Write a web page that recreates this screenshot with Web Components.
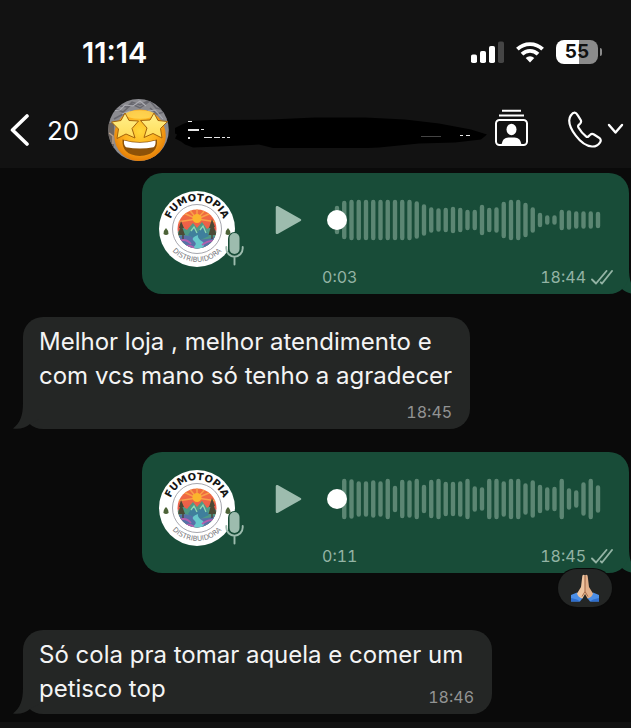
<!DOCTYPE html>
<html lang="pt-BR">
<head>
<meta charset="utf-8">
<meta name="viewport" content="width=device-width, initial-scale=1">
<title>Chat</title>
<style>
    html, body {
        margin: 0;
        padding: 0;
        background: #0a0a0a;
    }
    body {
        font-family: Inter, "Liberation Sans", sans-serif;
        color: #f4f4f4;
        overflow-x: hidden;
    }
</style>
</head>
<body>
<chat-app></chat-app>

<script>
const makeTemplate = (html) => {
    const template = document.createElement('template');
    template.innerHTML = html;
    return template;
};

const statusTemplate = makeTemplate(`
    <style>
        :host {
            display: flex;
            align-items: center;
            justify-content: space-between;
            height: 104px;
            padding: 0 29px 0 82px;
            color: #fff;
        }
        .clock {
            font-size: 29px;
            font-weight: 600;
        }
        .icons {
            display: flex;
            align-items: center;
            gap: 12px;
        }
        .battery {
            display: flex;
            align-items: center;
            gap: 2px;
        }
        .level {
            width: 42px;
            border-radius: 8px;
            background: linear-gradient(90deg, #fff 55%, #8b8b8b 55%);
            color: #111;
            font-size: 19px;
            font-weight: 700;
            line-height: 24px;
            text-align: center;
        }
        .nub {
            width: 2px;
            height: 8px;
            border-radius: 0 2px 2px 0;
            background: #8b8b8b;
        }
    </style>
    <span class="clock">11:14</span>
    <div class="icons">
        <svg width="33" height="22" viewBox="0 0 33 22" fill="#fff">
            <rect x="0" y="13.5" width="6" height="8.5" rx="1.8"/>
            <rect x="9" y="10" width="6" height="12" rx="1.8"/>
            <rect x="18" y="5" width="6" height="17" rx="1.8"/>
            <rect x="27" y="0.5" width="6" height="21.5" rx="1.8" fill="#454545"/>
        </svg>
        <svg width="28" height="22" viewBox="0 0 28 22" fill="none" stroke="#fff" stroke-width="3.8">
            <path d="M1.4 8.2a18 18 0 0 1 25.2 0"/>
            <path d="M6 13.1a11.4 11.4 0 0 1 16 0"/>
            <path d="M14 21.4l-4.3-4.4a6.2 6.2 0 0 1 8.6 0z" fill="#fff" stroke="none"/>
        </svg>
        <div class="battery"><span class="level">55</span><span class="nub"></span></div>
    </div>`);

class StatusBar extends HTMLElement {
    constructor () {
        super();
        this.attachShadow({ mode: 'open' }).appendChild(statusTemplate.content.cloneNode(true));
    }
}

const headerTemplate = makeTemplate(`
    <style>
        :host {
            display: flex;
            align-items: center;
            height: 64px;
            padding: 0 7px 0 10px;
        }
        button, a {
            display: flex;
            align-items: center;
            flex: none;
            padding: 0;
            border: none;
            background: none;
            color: #fff;
            font: inherit;
            text-decoration: none;
            cursor: pointer;
        }
        svg {
            display: block;
        }
        .back {
            gap: 18px;
            width: 98px;
            font-size: 26px;
        }
        .name {
            flex: 1;
            min-width: 0;
            margin: 0 8px 0 6px;
        }
        .name svg {
            width: 100%;
            height: 36px;
        }
        .call {
            gap: 5px;
            margin-left: 40px;
        }
    </style>
    <a class="back" href="#chats" aria-label="Voltar">
        <svg width="19" height="32" viewBox="0 0 19 32" fill="none" stroke="#fff" stroke-width="3.6" stroke-linecap="round" stroke-linejoin="round"><path d="M17 2L2.5 16 17 30"/></svg>
        <span>20</span>
    </a>
    <svg width="61" height="62" viewBox="0 0 61 62">
        <defs>
            <clipPath id="round"><ellipse cx="30.5" cy="31" rx="30.3" ry="31"/></clipPath>
            <radialGradient id="face" cx=".5" cy=".42" r=".6">
                <stop offset="0" stop-color="#ffd83a"/>
                <stop offset=".55" stop-color="#fcae1c"/>
                <stop offset="1" stop-color="#e27804"/>
            </radialGradient>
            <linearGradient id="star" x1="0" y1="0" x2="0" y2="1">
                <stop offset="0" stop-color="#fff08c"/>
                <stop offset="1" stop-color="#ffdc58"/>
            </linearGradient>
        </defs>
        <g clip-path="url(#round)">
            <rect width="61" height="62" fill="#8b8b90"/>
            <path d="M0 15l8-5 7 3 9-8 8 4 10-7 6 7 9 2M12 7l7 1 5-5 8 3 8-4M6 20l9-5 6 2M42 9l7 6 7-2" fill="none" stroke="#68686f" stroke-width="1.5"/>
            <path d="M3 12l9-1 5-5 8 1 7-5 6 5M40 12l7-1 8 9M14 15l8-3" fill="none" stroke="#adadb3" stroke-width="1.1"/>
            <path d="M0 24h6v28l-6-8z" fill="#6d6661"/>
            <path d="M1 34l4 3v8" fill="none" stroke="#b9a18c" stroke-width="1.5"/>
            <ellipse cx="32" cy="36.5" rx="25.8" ry="26" fill="url(#face)"/>
            <ellipse cx="32" cy="15.5" rx="15" ry="4.2" fill="#ffdf63" opacity=".7"/>
            <path d="M14.5 40.5q17.500 5 34.500 0q1.500 15.500-17.200 16.500q-18.500-1-17.300-16.500z" fill="#8d5208"/>
            <path d="M16 41.500q16 4.500 31.500 0q.5 5-2 6.800q-13.500 2.600-27.500 0q-2.500-2.300-2-6.800z" fill="#fff"/>
        </g>
        <g fill="url(#star)" stroke="#a3620a" stroke-width="1" stroke-linejoin="round">
            <path d="M17 14l4 7.500 9.500 0.500-6.500 7.500 3 9.500-9-4-9 4.500 1.500-9.500-7-7 9.500-1.500z"/>
            <path d="M46 14l4 7.500 9.500 1-7 7 1.500 9.500-9-4.500-9 4 3-9.500-6.500-7.500 9.500-.5z"/>
        </g>
    </svg>
    <div class="name">
        <svg viewBox="0 0 312 36" preserveAspectRatio="none">
            <path d="M0 16l8-4 8-3 20-1 60-.5 44-2 50 0 40 2 34 4 32 6 16 5-6 5-26 3-36 1-40 4-44 2-56 0-20-5-40 2-26 1-8-3-4-3-6-3 2-4-4-2 2-3z" fill="#000"/>
            <g fill="#e8e8e8">
                <rect x="13" y="9" width="4" height="1"/>
                <rect x="13" y="17" width="11" height="2"/>
                <rect x="26" y="17" width="3" height="1"/>
                <rect x="13" y="25" width="2" height="2"/>
                <rect x="29" y="25" width="8" height="1"/>
                <rect x="39" y="25" width="6" height="1"/>
                <rect x="47" y="25" width="3" height="1"/>
                <rect x="52" y="25" width="3" height="1"/>
                <rect x="285" y="23" width="3" height="1"/>
                <rect x="291" y="23" width="4" height="1"/>
                <rect x="246" y="24" width="20" height="1" fill="#444"/>
            </g>
        </svg>
    </div>
    <button type="button" aria-label="Contato">
        <svg width="33" height="42" viewBox="0 0 33 42" fill="none" stroke="#fff" stroke-width="2">
            <path d="M7 1.800h19M4 6.400h25"/>
            <rect x="1" y="11" width="31" height="25" rx="3.500"/>
            <ellipse cx="16.500" cy="20.500" rx="5" ry="5.700" fill="#fff" stroke="none"/>
            <path d="M6.500 35.500q1-7 7-7h6q6 0 7 7z" fill="#fff" stroke="none"/>
        </svg>
    </button>
    <button class="call" type="button" aria-label="Ligar">
        <svg width="34" height="39" viewBox="0 0 34 39" fill="none" stroke="#fff" stroke-width="2.200" stroke-linejoin="round"><path d="M2.800 4.500C4 2.800 5.500 1.600 6.800 1.700C8.200 1.800 9 3 9.800 4.400L12.600 8.800C13.500 10.300 13.200 11.500 12 12.700L10.500 14.100C9.800 14.900 10 15.700 10.600 16.800C12.400 20 15.300 23.200 18 25.400C19 26.200 19.800 26.100 20.500 25.400L22.200 23.800C23.300 22.700 24.500 22.600 26 23.500L31 26.700C32.900 28 33.200 29.700 32.100 31.300C30.300 34 27.500 35.700 24 35.500C18.700 35.200 12.200 30.600 7.800 24.700C3.800 19.500 1.200 13.500 1.200 9.500C1.200 7.500 1.800 5.900 2.800 4.500Z"/></svg>
        <svg width="17" height="14" viewBox="0 0 17 14" fill="none" stroke="#fff" stroke-width="2.400" stroke-linecap="round" stroke-linejoin="round"><path d="M2 2l6.500 7.500L15 2"/></svg>
    </button>`);

class ChatHeader extends HTMLElement {
    constructor () {
        super();
        this.attachShadow({ mode: 'open' }).appendChild(headerTemplate.content.cloneNode(true));
    }
}

const logoTemplate = makeTemplate(`
    <style>
        :host {
            display: block;
            position: relative;
            width: 76px;
            height: 76px;
            margin: 1px 0 0 1px;
        }
        svg {
            display: block;
        }
        text {
            font-family: "DejaVu Sans", sans-serif;
        }
        .mic {
            position: absolute;
            right: -9px;
            bottom: 1px;
        }
    </style>
    <svg width="76" height="76" viewBox="0 0 76 76">
        <defs>
            <path id="top" d="M10 38a28 28 0 0 1 56 0"/>
            <path id="bottom" d="M5 38a33 33 0 0 0 66 0"/>
            <clipPath id="disc"><circle cx="38" cy="38" r="19.500"/></clipPath>
            <linearGradient id="sky" x1="0" y1="0" x2="0" y2="1">
                <stop offset="0" stop-color="#f0703c"/>
                <stop offset="1" stop-color="#e84a5c"/>
            </linearGradient>
        </defs>
        <circle cx="38" cy="38" r="38" fill="#fff"/>
        <circle cx="38" cy="38" r="24.500" fill="none" stroke="#8f8f98" stroke-width=".8"/>
        <g clip-path="url(#disc)">
            <rect x="18" y="18" width="40" height="40" fill="url(#sky)"/>
            <path d="M38 28L20 20M38 28L28 16M38 28V16M38 28l11-12M38 28l19-8M38 28l20 3M38 28l-20 3" stroke="#f9a04a" stroke-width="1.500"/>
            <circle cx="38" cy="27.500" r="4.500" fill="#fbb52c"/>
            <path d="M18 42l5-6 5 3 6-7 4 5 5-6 5 7 4-3 6 6v18H18z" fill="#4e9a86"/>
            <path d="M29 44l6-9 4 6 5-7 6 11-11 5z" fill="#3f7f9c"/>
            <path d="M32 40l3-4 3 6M41 39l3-4 3 7" fill="none" stroke="#8fd8b0" stroke-width="1.300"/>
            <path d="M18 46q9-4 17 1q8 4 23-2v14H18z" fill="#5671a8"/>
            <path d="M31 58q9-4 4-8q-4-3 4-6q-1 4 5 7q3 4-3 8z" fill="#67c8cb"/>
            <path d="M20 50q7-3 12 3M43 54q6-5 14-4M25 56q6-3 10 1" fill="none" stroke="#b25fae" stroke-width="1.800"/>
            <path d="M22 30l3 7-1.500 0 2.500 7h-7l2-7h-1zM53 28l3 8-1 0 2.500 8h-8l2-7h-1.500z" fill="#4c4a35"/>
            <path d="M24 44v4M53 44v4" stroke="#513a2d" stroke-width="1.300"/>
        </g>
        <g fill="#4d6338">
            <path d="M7 37q3 3 2.500 6q-2.500 1.800-5 0q-.5-3 2.500-6z"/>
            <path d="M69 37q3 3 2.500 6q-2.500 1.800-5 0q-.5-3 2.500-6z"/>
        </g>
        <text font-size="10" font-weight="700" fill="#141414" text-anchor="middle"><textPath href="#top" startOffset="50%">FUMOTOPIA</textPath></text>
        <text font-size="7" fill="#77777c" text-anchor="middle"><textPath href="#bottom" startOffset="50%">DISTRIBUIDORA</textPath></text>
    </svg>
    <svg class="mic" width="19" height="34" viewBox="0 0 19 34">
        <rect x="3" y="0" width="13" height="24" rx="6.500" fill="#184c38"/>
        <rect x="4.500" y="1" width="10" height="21" rx="5" fill="#9dbcae"/>
        <path d="M1.300 15v1.500a8.200 8.200 0 0 0 16.400 0V15M9.500 25v7.500" fill="none" stroke="#9dbcae" stroke-width="1.900" stroke-linecap="round"/>
    </svg>`);

class ShopLogo extends HTMLElement {
    constructor () {
        super();
        this.attachShadow({ mode: 'open' }).appendChild(logoTemplate.content.cloneNode(true));
    }
}

const voiceTemplate = makeTemplate(`
    <style>
        :host {
            display: block;
            position: relative;
            margin: 0 2px 0 142px;
            color: #93b3a4;
        }
        .bubble {
            position: relative;
            display: flex;
            align-items: flex-start;
            padding: 17px 16px 7px;
            border-radius: 20px;
            background: #184c38;
        }
        svg {
            display: block;
        }
        .tail {
            position: absolute;
            right: -10px;
            bottom: 0;
        }
        .play {
            display: flex;
            align-items: center;
            height: 60px;
            margin: 0 20px 0 40px;
            padding: 0;
            border: none;
            background: none;
            cursor: pointer;
        }
        .track {
            flex: 1;
            min-width: 0;
        }
        .seek {
            display: grid;
            align-items: center;
            height: 60px;
            margin: 0 12px 0 5px;
        }
        .seek > * {
            grid-area: 1 / 1;
            width: 100%;
        }
        input {
            -webkit-appearance: none;
            appearance: none;
            height: 20px;
            margin: 0;
            background: transparent;
        }
        input::-webkit-slider-thumb {
            -webkit-appearance: none;
            width: 20px;
            height: 20px;
            border-radius: 50%;
            background: #fff;
        }
        .info {
            display: flex;
            align-items: center;
            margin-top: 17px;
            font-size: 16px;
            font-variant-numeric: tabular-nums;
            line-height: 20px;
        }
        .sent {
            margin: 0 5px 0 auto;
        }
        ::slotted(*) {
            position: absolute;
            right: 17px;
            top: 117px;
        }
    </style>
    <svg class="tail" width="30" height="26" viewBox="0 0 30 26"><path d="M20 0C20 12 22 19 30 25C23 27 17 24.500 13 21L0 12V0Z" fill="#184c38"/></svg>
    <div class="bubble">
        <shop-logo></shop-logo>
        <button class="play" type="button" aria-label="Reproduzir">
            <svg width="27" height="30" viewBox="0 0 27 30"><path d="M2 2.200L25 15 2 27.800Z" fill="#9dbcae" stroke="#9dbcae" stroke-width="2.500" stroke-linejoin="round"/></svg>
        </button>
        <div class="track">
            <div class="seek">
                <svg class="wave" viewBox="0 0 274 42" stroke="#5c8673" stroke-width="4.400" stroke-linecap="round"></svg>
                <input type="range" min="0" max="100" value="0" aria-label="Posição do áudio">
            </div>
            <div class="info">
                <span class="length"></span>
                <time class="sent"></time>
                <svg width="22" height="15" viewBox="0 0 22 15" fill="none" stroke="#93b3a4" stroke-width="1.900" stroke-linecap="round" stroke-linejoin="round"><path d="M1 9.500l4 4L15.500 1M9.800 12.300l1.200 1.200L21 1"/></svg>
            </div>
        </div>
    </div>
    <slot></slot>`);

class VoiceMessage extends HTMLElement {
    constructor () {
        super();
        this._shadowRoot = this.attachShadow({ mode: 'open' });
        this._shadowRoot.appendChild(voiceTemplate.content.cloneNode(true));
    }
    connectedCallback () {
        this._shadowRoot.querySelector('.length').textContent = this.getAttribute('length');
        this._shadowRoot.querySelector('.sent').textContent = this.getAttribute('time');
        this._renderWave();
    }
    _renderWave () {
        const levels = this.getAttribute('levels').split(' ').map(Number);
        const d = levels.map((level, i) => {
            const half = level / 2 - 2; // round caps add the rest
            return `M${10 + i * 7.25} ${21 - half}V${21 + half}`;
        }).join('');
        this._shadowRoot.querySelector('.wave').innerHTML = `<path d="${d}"/>`;
    }
}

const textTemplate = makeTemplate(`
    <style>
        :host {
            display: flex;
            flex-direction: column;
            position: relative;
            box-sizing: border-box;
            width: fit-content;
            max-width: calc(100% - 162px);
            margin-left: 23px;
            padding: 8px 18px 7px 16px;
            border-radius: 20px;
            background: #242625;
        }
        .tail {
            position: absolute;
            left: -10px;
            bottom: 0;
        }
        p {
            position: relative;
            margin: 0;
            font-size: 24px;
            line-height: 34px;
        }
        time {
            align-self: flex-end;
            margin-top: 9px;
            color: #929393;
            font-size: 16px;
            font-variant-numeric: tabular-nums;
            line-height: 20px;
        }
        :host([compact]) p {
            display: flow-root;
        }
        :host([compact]) time {
            float: right;
            margin-top: 15px;
        }
    </style>
    <svg class="tail" width="30" height="26" viewBox="0 0 30 26"><path d="M10 0C10 13 7 20 0 25.500C7 26.500 13 24.500 17 21L26 16V0Z" fill="#242625"/></svg>
    <p><slot></slot></p>
    <time></time>`);

class TextMessage extends HTMLElement {
    constructor () {
        super();
        this._shadowRoot = this.attachShadow({ mode: 'open' });
        this._shadowRoot.appendChild(textTemplate.content.cloneNode(true));
    }
    connectedCallback () {
        const time = this._shadowRoot.querySelector('time');
        time.textContent = this.getAttribute('time');
        // compact messages keep the time on their last line
        if (this.hasAttribute('compact')) this._shadowRoot.querySelector('p').appendChild(time);
    }
}

const reactionTemplate = makeTemplate(`
    <style>
        :host {
            display: block;
        }
        button {
            display: flex;
            align-items: center;
            justify-content: center;
            width: 54px;
            height: 38px;
            padding: 0;
            border: none;
            border-radius: 19px;
            background: #242625;
            box-shadow: 0 0 0 1px #0a0a0a;
            cursor: pointer;
        }
    </style>
    <button type="button" aria-label="Reação: mãos juntas">
        <svg width="28" height="28" viewBox="0 0 28 28">
            <path d="M0 21l6-2.500 6 5L9 27.500H0z" fill="#4d8fe6"/>
            <path d="M28 21l-6-2.500-6 5 3 4h9z" fill="#4d8fe6"/>
            <path d="M0 24l6 1.500 3 2H0zM28 24l-6 1.500-3 2h9z" fill="#2f6fd0"/>
            <path d="M13.900 1.500C12.500.2 11.300 1 11.200 3L10 13 6 19.500q1 4 5.500 5L14 20z" fill="#f0c5a0"/>
            <path d="M14.100 1.500C15.500.2 16.700 1 16.800 3L18 13l4 6.500q-1 4-5.500 5L14 20z" fill="#e3b08a"/>
            <path d="M14 2v15.500l-3 5M14 17.500l3 5" fill="none" stroke="#a66a48" stroke-width="1"/>
        </svg>
    </button>`);

class MessageReaction extends HTMLElement {
    constructor () {
        super();
        this.attachShadow({ mode: 'open' }).appendChild(reactionTemplate.content.cloneNode(true));
    }
}

const appTemplate = makeTemplate(`
    <style>
        :host {
            display: flex;
            flex-direction: column;
            min-height: 100vh;
        }
        header {
            height: 168px;
            background: #121212;
        }
        main {
            display: flex;
            flex-direction: column;
            flex: 1;
            gap: 23px;
            padding: 5px 0 8px;
        }
        .reacted {
            margin-bottom: 34px;
        }
        footer {
            height: 6px;
            background: #121212;
        }
        chat-header {
            margin-top: -6px;
        }
    </style>
    <header>
        <status-bar></status-bar>
        <chat-header></chat-header>
    </header>
    <main>
        <voice-message length="0:03" time="18:44" levels="28 38 40 40 40 40 40 40 40 40 40 37 31 25 23 24 26 24 20 20 30 24 25 36 40 40 34 25 14 9 9 20 19 17 17 17 16"></voice-message>
        <text-message time="18:45">Melhor loja , melhor atendimento e<br>com vcs mano só tenho a agradecer</text-message>
        <voice-message class="reacted" length="0:11" time="18:45" levels="16 40 39 35 35 37 35 40 26 38 37 40 28 38 40 34 34 35 40 25 23 40 40 35 40 40 31 37 28 23 24 40 21 17 33 40 27"><message-reaction></message-reaction></voice-message>
        <text-message time="18:46" compact>Só cola pra tomar aquela e comer um petisco top</text-message>
    </main>
    <footer></footer>`);

class ChatApp extends HTMLElement {
    constructor () {
        super();
        this.attachShadow({ mode: 'open' }).appendChild(appTemplate.content.cloneNode(true));
    }
}

customElements.define('status-bar', StatusBar);
customElements.define('chat-header', ChatHeader);
customElements.define('shop-logo', ShopLogo);
customElements.define('voice-message', VoiceMessage);
customElements.define('text-message', TextMessage);
customElements.define('message-reaction', MessageReaction);
customElements.define('chat-app', ChatApp);
</script>
</body>
</html>
